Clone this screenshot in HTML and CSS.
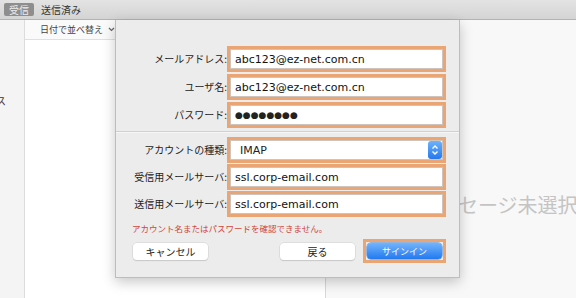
FILE: index.html
```html
<!DOCTYPE html>
<html lang="ja">
<head>
<meta charset="utf-8">
<link rel="stylesheet" href="styles.css">
</head>
<body>
<div class="toolbar">
  <span class="tab active">受信</span>
  <span class="tab">送信済み</span>
</div>
<div class="main">
  <div class="sidebar"><div class="side-item">ス</div></div>
  <div class="list">
    <div class="list-header">日付で並べ替え
      <svg class="chev" width="7" height="5" viewBox="0 0 7 5"><path d="M1 1 L3.5 3.5 L6 1" fill="none" stroke="#666" stroke-width="1.2"/></svg>
    </div>
  </div>
  <div class="detail"><div class="empty">メッセージ未選択</div></div>
</div>

<div class="dialog">
  <div class="grid g1">
    <label>メールアドレス:</label>
    <div class="hl">abc123@ez-net.com.cn</div>
    <label>ユーザ名:</label>
    <div class="hl">abc123@ez-net.com.cn</div>
    <label>パスワード:</label>
    <div class="hl"><span class="dots">●●●●●●●●</span></div>
  </div>
  <div class="divider"></div>
  <div class="grid g2">
    <label>アカウントの種類:</label>
    <div class="hl select"><span class="imap">IMAP</span>
      <span class="stepper"><svg width="14" height="18" viewBox="0 0 14 18"><path d="M4.5 7.5 L7 5 L9.5 7.5 M4.5 10.5 L7 13 L9.5 10.5" fill="none" stroke="#fff" stroke-width="1.4"/></svg></span>
    </div>
    <label>受信用メールサーバ:</label>
    <div class="hl">ssl.corp-email.com</div>
    <label>送信用メールサーバ:</label>
    <div class="hl">ssl.corp-email.com</div>
  </div>
  <p class="error">アカウント名またはパスワードを確認できません。</p>
  <div class="buttons">
    <span class="btn">キャンセル</span>
    <span class="btn back">戻る</span>
    <span class="ring"><span class="btn primary">サインイン</span></span>
  </div>
</div>
</body>
</html>
```

FILE: styles.css
```css
body {
  margin: 0;
  width: 576px;
  height: 298px;
  overflow: hidden;
  position: relative;
  background: #fff;
  font-family: "Noto Sans CJK JP", sans-serif;
}

.toolbar {
  height: 20px;
  box-sizing: border-box;
  border-bottom: 1px solid #b3b3b3;
  background: linear-gradient(#e3e3e3, #d4d4d4);
  display: flex;
  align-items: center;
  padding-left: 4px;
  gap: 7px;
}
.tab {
  font-size: 10px;
  line-height: 13px;
  color: #333;
}
.tab.active {
  background: #8e8e8e;
  color: #ececec;
  border-radius: 2px;
  padding: 0 5px;
}

.main {
  display: flex;
  height: 278px;
}
.sidebar {
  width: 25px;
  box-sizing: border-box;
  border-right: 1px solid #dcdcdc;
  background: #f4f4f4;
  overflow: hidden;
}
.side-item {
  font-size: 10px;
  line-height: 12px;
  color: #333;
  margin: 75px 0 0 -4px;
}
.list {
  width: 301px;
  box-sizing: border-box;
  border-right: 1px solid #d8d8d8;
  background: #fff;
}
.list-header {
  height: 20px;
  box-sizing: border-box;
  border-bottom: 1px solid #e0e0e0;
  background: #fafafa;
  display: flex;
  align-items: center;
  gap: 5px;
  padding-left: 15px;
  font-size: 9px;
  color: #444;
}
.detail {
  flex: 1;
  background: #f8f8f8;
  overflow: hidden;
  padding: 175px 0 0 92px;
  box-sizing: border-box;
}
.empty {
  font-size: 20px;
  line-height: 20px;
  color: #c4c4c4;
  white-space: nowrap;
}

.dialog {
  position: absolute;
  left: 115px;
  top: 20px;
  width: 345px;
  height: 258px;
  box-sizing: border-box;
  background: #ececec;
  border: 1px solid #bdbdbd;
  border-top: none;
  box-shadow: 0 4px 12px rgba(0, 0, 0, 0.22);
  padding-top: 26px;
  display: flex;
  flex-direction: column;
}
.grid {
  display: grid;
  grid-template-columns: 111px 219px;
  align-items: center;
}
.g1 { row-gap: 2px; }
.g2 { row-gap: 1px; }
label {
  font-size: 10px;
  line-height: 14px;
  color: #222;
  text-align: right;
  white-space: nowrap;
}
.hl {
  height: 26px;
  box-sizing: border-box;
  border: 3px solid #e9a674;
  background: #fff;
  box-shadow: inset 0 0 0 1px #cfc4bc;
  display: flex;
  align-items: center;
  padding-left: 5px;
  font-family: "DejaVu Sans", sans-serif;
  font-size: 11px;
  color: #111;
  white-space: nowrap;
}
.dots {
  font-size: 9px;
  color: #222;
}
.select {
  padding-left: 10px;
  padding-right: 1px;
}
.imap {
  color: #222;
}
.stepper {
  margin-left: auto;
  width: 14px;
  height: 18px;
  border-radius: 3px;
  background: linear-gradient(#6fb2fb, #2479ec);
  display: flex;
}
.divider {
  height: 1px;
  background: #d0d0d0;
  border-bottom: 1px solid #f7f7f7;
  margin: 3px 0 4px;
}
.error {
  margin: 5px 0 0 16px;
  font-size: 8.5px;
  line-height: 12px;
  color: #d0463b;
  white-space: nowrap;
}
.buttons {
  margin-top: 5px;
  display: flex;
  align-items: center;
  padding: 0 13px 0 17px;
}
.btn {
  width: 75px;
  height: 17px;
  box-sizing: border-box;
  border-radius: 4px;
  background: #fff;
  box-shadow: 0 0 0 0.5px #cfcfcf, 0 1px 1px rgba(0, 0, 0, 0.18);
  display: flex;
  align-items: center;
  justify-content: center;
  font-size: 10px;
  color: #222;
}
.back {
  margin-left: auto;
}
.ring {
  margin-left: 8px;
  border: 3px solid #e9a674;
  padding: 1px;
  display: flex;
}
.btn.primary {
  height: 16px;
  background: linear-gradient(#72b4fc, #217af0);
  box-shadow: 0 0 0 0.5px #3b7fd6;
  color: #fff;
  font-size: 9px;
}
```
